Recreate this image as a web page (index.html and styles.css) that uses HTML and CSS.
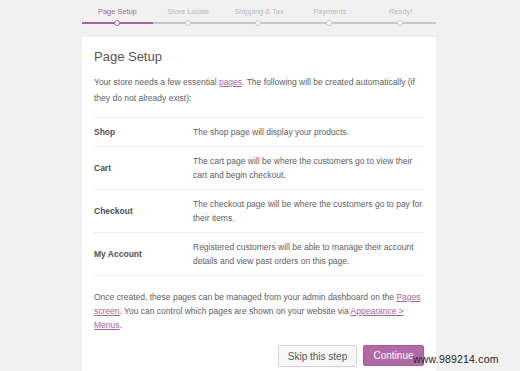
FILE: index.html
```html
<!DOCTYPE html>
<html>
<head>
<meta charset="utf-8">
<link rel="stylesheet" href="styles.css">
</head>
<body>
<div class="wrap">
  <ol class="steps">
    <li class="step active"><span class="step-label">Page Setup</span><span class="track"></span></li>
    <li class="step"><span class="step-label">Store Locale</span><span class="track"></span></li>
    <li class="step"><span class="step-label">Shipping &amp; Tax</span><span class="track"></span></li>
    <li class="step"><span class="step-label">Payments</span><span class="track"></span></li>
    <li class="step"><span class="step-label">Ready!</span><span class="track"></span></li>
  </ol>
  <div class="card">
    <h1 class="title">Page Setup</h1>
    <p class="intro">Your store needs a few essential <a href="#">pages</a>. The following will be created automatically (if they do not already exist):</p>
    <table class="pages">
      <tr><th>Shop</th><td>The shop page will display your products.</td></tr>
      <tr><th>Cart</th><td>The cart page will be where the customers go to view their cart and begin checkout.</td></tr>
      <tr><th>Checkout</th><td>The checkout page will be where the customers go to pay for their items.</td></tr>
      <tr><th>My Account</th><td>Registered customers will be able to manage their account details and view past orders on this page.</td></tr>
    </table>
    <p class="outro">Once created, these pages can be managed from your admin dashboard on the <a href="#">Pages screen</a>. You can control which pages are shown on your website via <a href="#">Appearance &gt; Menus</a>.</p>
    <div class="actions">
      <button class="btn btn-skip">Skip this step</button>
      <button class="btn btn-primary">Continue</button>
    </div>
  </div>
</div>
<div class="watermark">www.989214.com</div>
</body>
</html>
```
FILE: styles.css
```css
html, body {
  margin: 0;
  padding: 0;
}
body {
  background: #f1f1f1;
  font-family: "Liberation Sans", Arial, sans-serif;
  color: #666;
  width: 520px;
  height: 371px;
  overflow: hidden;
  position: relative;
}
.wrap {
  width: 354px;
  margin-left: 82px;
}
.steps {
  list-style: none;
  margin: 0;
  padding: 7px 0 0 0;
  display: flex;
}
.step {
  flex: 1;
  display: flex;
  flex-direction: column;
  align-items: center;
}
.step-label {
  font-size: 7.4px;
  line-height: 10px;
  color: #b8b8b8;
  white-space: nowrap;
}
.step.active .step-label {
  color: #a46497;
}
.track {
  position: relative;
  align-self: stretch;
  height: 2px;
  margin-top: 5px;
  background: #c8c8c8;
}
.step.active .track {
  background: #a46497;
}
.track::after {
  content: "";
  position: absolute;
  left: 50%;
  top: 50%;
  width: 4px;
  height: 4px;
  margin: -3.5px 0 0 -3.5px;
  border: 1.5px solid #c8c8c8;
  border-radius: 50%;
  background: #fff;
}
.step.active .track::after {
  border-color: #a46497;
}
.card {
  box-sizing: border-box;
  margin-top: 13px;
  background: #fff;
  padding: 12px 12px 0 12px;
  height: 334px;
  overflow: hidden;
}
.title {
  margin: 0;
  font-size: 13px;
  line-height: 16px;
  font-weight: normal;
  color: #555;
}
.intro {
  margin: 10px 0 11px 0;
  font-size: 8.5px;
  line-height: 15.5px;
  color: #606060;
}
a {
  color: #a46497;
}
.pages {
  width: 100%;
  border-collapse: collapse;
  font-size: 8.5px;
  line-height: 14px;
}
.pages th, .pages td {
  border-top: 1px solid #ececec;
  border-bottom: 1px solid #ececec;
  padding: 7px 0;
  vertical-align: middle;
  text-align: left;
}
.pages th {
  width: 99px;
  color: #505050;
  font-weight: bold;
}
.pages td {
  color: #606060;
}
.outro {
  margin: 14px 0 13px 0;
  font-size: 8.5px;
  line-height: 14px;
  color: #606060;
}
.actions {
  display: flex;
  justify-content: flex-end;
  align-items: flex-start;
  gap: 6px;
}
.btn {
  font-family: "Liberation Sans", Arial, sans-serif;
  font-size: 10px;
  border-radius: 2px;
  padding: 0;
  cursor: pointer;
}
.btn-skip {
  width: 79px;
  height: 22px;
  background: #f7f7f7;
  border: 1px solid #d4d4d4;
  color: #555;
}
.btn-primary {
  width: 61px;
  height: 21px;
  background: #b16aa6;
  border: 1px solid #a2609a;
  color: #fff;
}
.watermark {
  position: absolute;
  left: 413px;
  top: 353px;
  font-size: 10.5px;
  line-height: 12px;
  letter-spacing: 0.2px;
  color: #222;
  white-space: nowrap;
}
```
